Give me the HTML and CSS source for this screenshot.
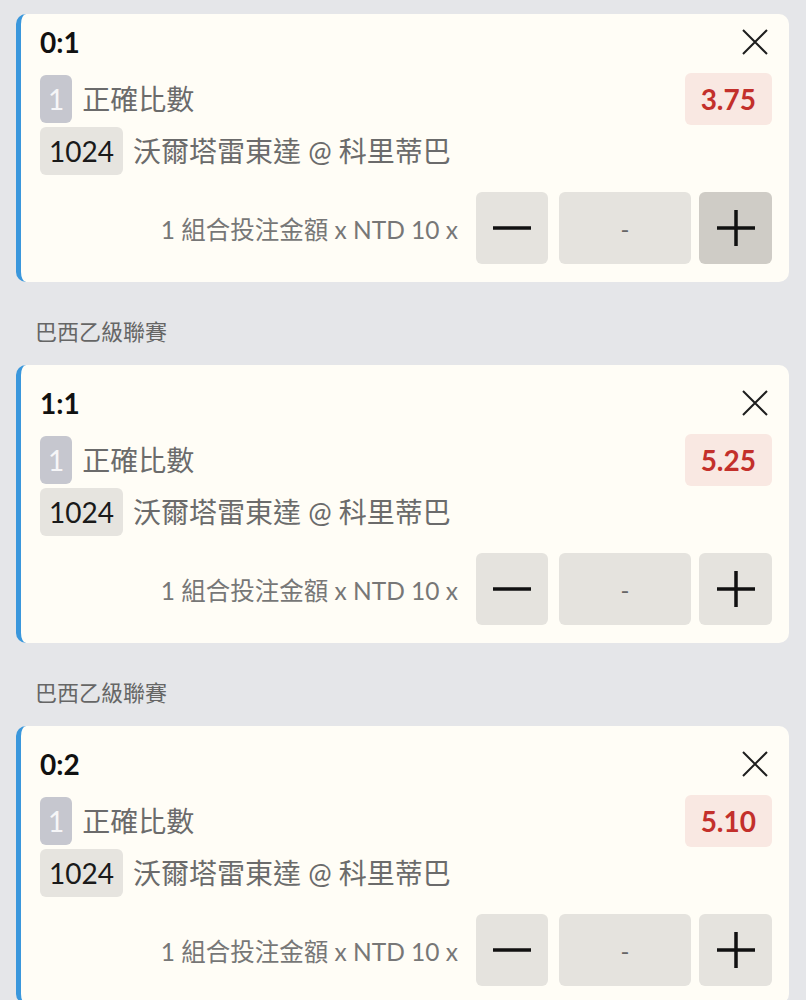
FILE: index.html
```html
<!DOCTYPE html>
<html lang="zh-Hant">
<head>
  <meta charset="UTF-8" />
  <meta name="viewport" content="width=device-width, initial-scale=1.0"/>
  <title>投注單</title>
  <link rel="stylesheet" href="styles.css">
</head>
<body>

<div class="slip">

  <div class="ticket ticket-cut">
    <div class="ticket-head">
      <span class="score">0:1</span>
      <button class="close" aria-label="close">
        <svg width="26" height="26" viewBox="0 0 26 26"><path d="M1 1 L25 25 M25 1 L1 25" stroke="#1e1e1e" stroke-width="2" fill="none"/></svg>
      </button>
    </div>
    <div class="row">
      <span class="tag tag-num">1</span>
      <span class="market">正確比數</span>
      <span class="odds">3.75</span>
    </div>
    <div class="row row-match">
      <span class="tag tag-id">1024</span>
      <span class="market">沃爾塔雷東達 @ 科里蒂巴</span>
    </div>
    <div class="stake">
      <span class="stake-label">1 組合投注金額 x NTD 10 x</span>
      <button class="step"><svg width="38" height="38" viewBox="0 0 38 38"><path d="M0 19 H38" stroke="#111" stroke-width="3.5"/></svg></button>
      <div class="amount">-</div>
      <button class="step step-plus is-pressed"><svg width="38" height="38" viewBox="0 0 38 38"><path d="M0 19 H38 M19 1 V37" stroke="#111" stroke-width="3.5"/></svg></button>
    </div>
  </div>

  <div class="league">巴西乙級聯賽</div>

  <div class="ticket">
    <div class="ticket-head">
      <span class="score">1:1</span>
      <button class="close" aria-label="close">
        <svg width="26" height="26" viewBox="0 0 26 26"><path d="M1 1 L25 25 M25 1 L1 25" stroke="#1e1e1e" stroke-width="2" fill="none"/></svg>
      </button>
    </div>
    <div class="row">
      <span class="tag tag-num">1</span>
      <span class="market">正確比數</span>
      <span class="odds">5.25</span>
    </div>
    <div class="row row-match">
      <span class="tag tag-id">1024</span>
      <span class="market">沃爾塔雷東達 @ 科里蒂巴</span>
    </div>
    <div class="stake">
      <span class="stake-label">1 組合投注金額 x NTD 10 x</span>
      <button class="step"><svg width="38" height="38" viewBox="0 0 38 38"><path d="M0 19 H38" stroke="#111" stroke-width="3.5"/></svg></button>
      <div class="amount">-</div>
      <button class="step step-plus"><svg width="38" height="38" viewBox="0 0 38 38"><path d="M0 19 H38 M19 1 V37" stroke="#111" stroke-width="3.5"/></svg></button>
    </div>
  </div>

  <div class="league">巴西乙級聯賽</div>

  <div class="ticket">
    <div class="ticket-head">
      <span class="score">0:2</span>
      <button class="close" aria-label="close">
        <svg width="26" height="26" viewBox="0 0 26 26"><path d="M1 1 L25 25 M25 1 L1 25" stroke="#1e1e1e" stroke-width="2" fill="none"/></svg>
      </button>
    </div>
    <div class="row">
      <span class="tag tag-num">1</span>
      <span class="market">正確比數</span>
      <span class="odds">5.10</span>
    </div>
    <div class="row row-match">
      <span class="tag tag-id">1024</span>
      <span class="market">沃爾塔雷東達 @ 科里蒂巴</span>
    </div>
    <div class="stake">
      <span class="stake-label">1 組合投注金額 x NTD 10 x</span>
      <button class="step"><svg width="38" height="38" viewBox="0 0 38 38"><path d="M0 19 H38" stroke="#111" stroke-width="3.5"/></svg></button>
      <div class="amount">-</div>
      <button class="step step-plus"><svg width="38" height="38" viewBox="0 0 38 38"><path d="M0 19 H38 M19 1 V37" stroke="#111" stroke-width="3.5"/></svg></button>
    </div>
  </div>

</div>

</body>
</html>
```

FILE: styles.css
```css
html, body {
  overflow: hidden;
}

body {
  margin: 0;
  padding: 0;
  background: #e5e6e9;
  font-family: Lato, "Noto Sans CJK TC", sans-serif;
  color: #222;
}

.slip {
  padding: 14px 17px 0 16px;
}

.ticket {
  background: #fffdf6;
  border-left: 5px solid #3a97dc;
  border-radius: 10px;
  padding: 22px 17px 18px 19px;
}

/* first ticket is scrolled a bit under the top */
.ticket-cut {
  padding-top: 12px;
}

.ticket-head {
  display: flex;
  align-items: center;
  justify-content: space-between;
  height: 32px;
}

.score {
  font-size: 28px;
  font-weight: bold;
  color: #111;
  line-height: 32px;
}

.close {
  border: none;
  background: none;
  padding: 0;
  margin-right: 4px;
  display: flex;
  cursor: pointer;
}

.row {
  display: flex;
  align-items: center;
  gap: 10px;
  height: 52px;
  margin-top: 15px;
}

.row-match {
  height: 48px;
  margin-top: 2px;
}

.tag {
  height: 48px;
  line-height: 48px;
  font-size: 28px;
  border-radius: 6px;
  padding: 0 8px;
}

.tag-num {
  background: #c6c7cf;
  color: #f6f6f8;
}

.tag-id {
  background: #e6e4df;
  color: #1a1a1a;
  padding: 0 9px;
}

.market {
  font-size: 28px;
  color: #6b6b6b;
  line-height: 48px;
}

.odds {
  margin-left: auto;
  height: 52px;
  line-height: 52px;
  padding: 0 16px;
  border-radius: 6px;
  background: #f9e8e2;
  color: #c3302b;
  font-size: 28px;
  font-weight: bold;
}

.stake {
  display: flex;
  align-items: center;
  justify-content: flex-end;
  margin-top: 17px;
  height: 72px;
}

.stake-label {
  font-size: 24.5px;
  color: #777;
  margin-right: 18px;
}

.step {
  width: 72px;
  height: 72px;
  border: none;
  border-radius: 6px;
  background: #e5e3de;
  display: flex;
  align-items: center;
  justify-content: center;
  padding: 0;
  cursor: pointer;
}

.step-plus {
  width: 73px;
}

.step.is-pressed {
  background: #cfccc6;
}

.amount {
  width: 132px;
  height: 72px;
  margin: 0 8px 0 11px;
  border-radius: 6px;
  background: #e5e3de;
  color: #666;
  font-size: 24px;
  display: flex;
  align-items: center;
  justify-content: center;
}

.league {
  padding: 34px 0 17px 19px;
  line-height: 32px;
  font-size: 22px;
  color: #666;
}
```
